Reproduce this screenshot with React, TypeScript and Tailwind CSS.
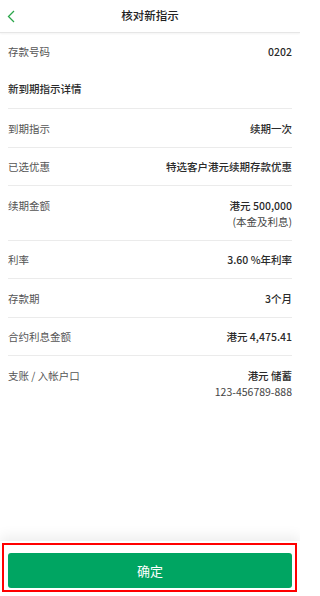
import React from "react";

const font = { fontFamily: '"Noto Sans CJK SC", "Noto Sans", sans-serif' };

function Row({ label, values, bordered = true }: { label: string; values: string[]; bordered?: boolean }) {
  return (
    <div className={`mx-2 flex justify-between pt-[11.5px] pb-[10px] ${bordered ? "border-b border-[#ebebeb]" : ""}`}>
      <div className="text-[10.5px] leading-[16px] text-[#555]">{label}</div>
      <div className="flex flex-col items-end">
        {values.map((v, i) => (
          <div key={i} className={`text-[10.5px] leading-[16px] ${i === 0 ? "font-medium text-[#2a2a2a]" : "font-normal text-[#444]"}`}>
            {v}
          </div>
        ))}
      </div>
    </div>
  );
}

export default function App() {
  return (
    <div className="relative flex h-[596px] w-[300px] flex-col overflow-hidden bg-white" style={font}>
      <div className="relative flex h-[33px] shrink-0 items-center justify-center border-b border-[#e6e6e6] shadow-[0_1px_2px_rgba(0,0,0,0.05)]">
        <svg className="absolute left-[7px] top-[10px]" width="9" height="13" viewBox="0 0 9 13" fill="none">
          <path d="M7 1 L1.5 6.5 L7 12" stroke="#2aa64a" strokeWidth="1.3" />
        </svg>
        <div className="text-[11.5px] font-medium text-[#222]">核对新指示</div>
      </div>
      <div className="flex-1">
        <div className="mx-2 flex justify-between pt-[11px] pb-[11px]">
          <div className="text-[10.5px] leading-[16px] text-[#555]">存款号码</div>
          <div className="text-[10.5px] leading-[16px] font-medium text-[#2a2a2a]">0202</div>
        </div>
        <div className="mx-2 border-b border-[#ebebeb] pt-[10px] pb-[11px]">
          <div className="text-[10.5px] leading-[16px] font-medium text-[#2a2a2a]">新到期指示详情</div>
        </div>
        <Row label="到期指示" values={["续期一次"]} />
        <Row label="已选优惠" values={["特选客户港元续期存款优惠"]} />
        <Row label="续期金额" values={["港元 500,000", "(本金及利息)"]} />
        <Row label="利率" values={["3.60 %年利率"]} />
        <Row label="存款期" values={["3个月"]} />
        <Row label="合约利息金额" values={["港元 4,475.41"]} />
        <Row label="支账 / 入帐户口" values={["港元 储蓄", "123-456789-888"]} bordered={false} />
      </div>
      <div className="relative h-[55px] shrink-0 bg-white pt-[12px] shadow-[0_-5px_12px_rgba(0,0,0,0.07)]">
        <button className="mx-[8px] flex h-[35px] w-[284px] items-center justify-center rounded-[3px] bg-[#00a562] text-[13px] text-white">
          确定
        </button>
        <div className="pointer-events-none absolute left-[2px] top-[2px] h-[49px] w-[295px] border-2 border-[#ff0000]" />
      </div>
    </div>
  );
}
